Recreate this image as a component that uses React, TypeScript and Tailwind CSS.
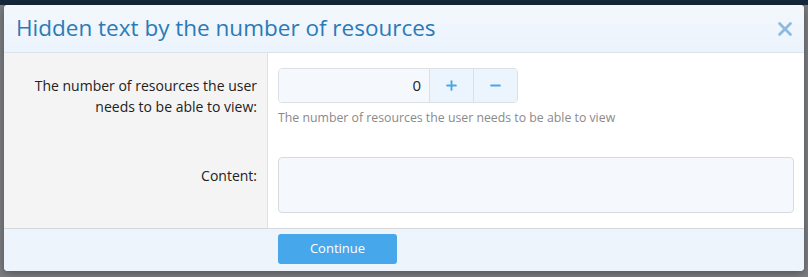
import { X, Plus, Minus } from "lucide-react";

export default function App() {
  return (
    <div
      className="relative h-[277px] w-[808px] overflow-hidden bg-[#7b7d80]"
      style={{ fontFamily: '"Open Sans", "Noto Sans", sans-serif' }}
    >
      {/* backdrop top strip */}
      <div className="h-[5px] w-full bg-[#16283b]" />

      {/* Dialog */}
      <div className="ml-[4px] flex h-[266px] w-[800px] flex-col overflow-hidden rounded-[4px] bg-white shadow-[0_2px_8px_rgba(0,0,0,0.35)]">
        {/* Header */}
        <div className="flex h-[48px] shrink-0 items-center justify-between border-b border-[#dde3ea] bg-gradient-to-b from-[#f4f8fd] to-[#ebf3fc] pl-[12px] pr-[8px]">
          <h1 className="text-[22.5px] leading-none text-[#2a7ab8]">
            Hidden text by the number of resources
          </h1>
          <X className="h-[22px] w-[22px] text-[#8cbbe0]" strokeWidth={3} />
        </div>

        {/* Body */}
        <div className="flex flex-1">
          <div className="flex w-[264px] shrink-0 flex-col border-r border-[#e1e1e1] bg-[#f4f4f4] pr-[10px] pt-[22px] text-right text-[14px] leading-[21px] text-[#222]">
            <p>
              The number of resources the user
              <br />
              needs to be able to view:
            </p>
            <p className="mt-[48px]">Content:</p>
          </div>

          <div className="flex flex-1 flex-col pl-[10px] pr-[10px] pt-[15px]">
            <div className="flex h-[35px] w-[240px] overflow-hidden rounded-[4px] border border-[#dcdfe3]">
              <div className="flex flex-1 items-center justify-end bg-[#f5f9fe] pr-[8px] text-[15px] text-[#222]">
                0
              </div>
              <div className="flex w-[44px] items-center justify-center border-l border-[#dcdfe3] bg-[#ecf4fd] text-[#47a7eb]">
                <Plus className="h-[15px] w-[15px]" strokeWidth={3} />
              </div>
              <div className="flex w-[44px] items-center justify-center border-l border-[#dcdfe3] bg-[#ecf4fd] text-[#47a7eb]">
                <Minus className="h-[15px] w-[15px]" strokeWidth={3} />
              </div>
            </div>
            <p className="mt-[6px] text-[12.3px] leading-[18px] text-[#8a8a8a]">
              The number of resources the user needs to be able to view
            </p>
            <div className="mt-[30px] h-[56px] w-full rounded-[4px] border border-[#d8dbde] bg-[#f5f9fe]" />
          </div>
        </div>

        {/* Footer */}
        <div className="flex h-[43px] shrink-0 items-start border-t border-[#d6d9dc] bg-[#edf4fc] pl-[274px] pt-[5px]">
          <button className="h-[30px] w-[119px] rounded-[3px] bg-[#47a7eb] text-[13px] text-white">
            Continue
          </button>
        </div>
      </div>
    </div>
  );
}
